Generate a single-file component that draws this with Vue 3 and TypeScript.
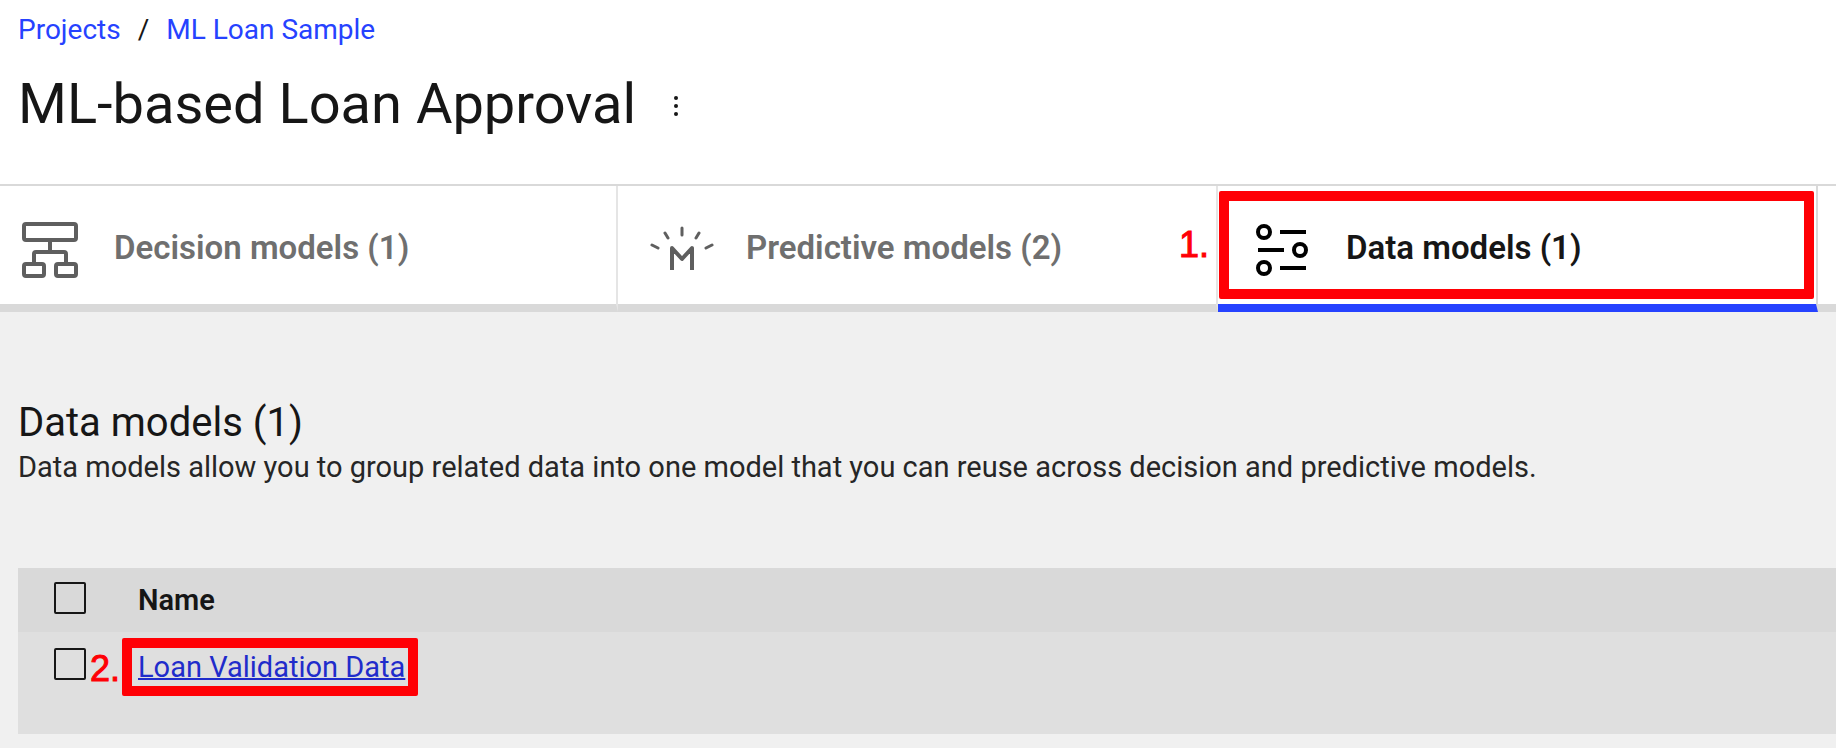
<script setup lang="ts">
import { ref } from 'vue'

type TabId = 'decision' | 'predictive' | 'data'

interface Tab {
  id: TabId
  label: string
  count: number
}

const tabs: Tab[] = [
  { id: 'decision', label: 'Decision models', count: 1 },
  { id: 'predictive', label: 'Predictive models', count: 2 },
  { id: 'data', label: 'Data models', count: 1 },
]

const activeTab = ref<TabId>('data')
const rows = ref([{ id: 1, name: 'Loan Validation Data', selected: false }])

function toggleAll(event: Event): void {
  const { checked } = event.target as HTMLInputElement
  rows.value.forEach((row) => (row.selected = checked))
}
</script>

<template>
  <div class="page">
    <header class="header">
      <nav class="breadcrumb" aria-label="Breadcrumb">
        <a href="#projects">Projects</a>
        <span class="slash">/</span>
        <a href="#sample">ML Loan Sample</a>
      </nav>
      <div class="title-row">
        <h1>ML-based Loan Approval</h1>
        <button class="menu" type="button" aria-label="More actions">
          <svg width="32" height="32" viewBox="0 0 32 32" fill="currentColor">
            <circle cx="16" cy="8" r="2" />
            <circle cx="16" cy="16" r="2" />
            <circle cx="16" cy="24" r="2" />
          </svg>
        </button>
      </div>
    </header>

    <div class="tabs" role="tablist">
      <button
        v-for="tab in tabs"
        :key="tab.id"
        class="tab"
        :class="{ active: tab.id === activeTab }"
        type="button"
        role="tab"
        :aria-selected="tab.id === activeTab"
        @click="activeTab = tab.id"
      >
        <svg class="icon" viewBox="0 0 64 64" fill="none" stroke="currentColor" stroke-width="4" aria-hidden="true">
          <template v-if="tab.id === 'decision'">
            <rect x="6" y="6" width="52" height="16" rx="2" />
            <rect x="6" y="46" width="20" height="12" rx="2" />
            <rect x="38" y="46" width="20" height="12" rx="2" />
            <path d="M32 22v12M16 46V36a2 2 0 0 1 2-2h28a2 2 0 0 1 2 2v10" />
          </template>
          <template v-else-if="tab.id === 'predictive'">
            <path d="M22 52V30l10 11 10-11v22" stroke-linejoin="round" />
            <path d="M32 10v7M15 15l3 5M49 15l-3 5M2 27l6 3M62 27l-6 3" stroke-width="3" stroke-linecap="round" />
          </template>
          <template v-else>
            <circle cx="14" cy="14" r="6" />
            <circle cx="50" cy="32" r="6" />
            <circle cx="14" cy="50" r="6" />
            <path d="M30 14h26M8 32h26M30 50h26" />
          </template>
        </svg>
        <span class="tab-label">{{ tab.label }} ({{ tab.count }})</span>
        <span v-if="tab.id === 'data'" class="mark tab-mark"><span class="step">1.</span></span>
      </button>
    </div>

    <main class="content">
      <h2>Data models (1)</h2>
      <p>Data models allow you to group related data into one model that you can reuse across decision and predictive models.</p>

      <table>
        <thead>
          <tr>
            <th class="select"><input type="checkbox" aria-label="Select all data models" @change="toggleAll" /></th>
            <th scope="col">Name</th>
          </tr>
        </thead>
        <tbody>
          <tr v-for="row in rows" :key="row.id">
            <td class="select"><input v-model="row.selected" type="checkbox" :aria-label="`Select ${row.name}`" /></td>
            <td>
              <a class="row-link" href="#data-model">{{ row.name }}<span class="mark row-mark"><span class="step">2.</span></span></a>
            </td>
          </tr>
        </tbody>
      </table>
    </main>
  </div>
</template>

<style>
body {
  background: #f0f0f0;
}
</style>

<style scoped>
.page {
  color: #161616;
  font-family: Roboto, "Liberation Sans", sans-serif;
  font-size: 28px;
  line-height: 36px;
  overflow-x: hidden;
}

.header {
  padding: 12px 18px 44px;
  background: #fff;
}

.breadcrumb {
  display: flex;
  gap: 17px;
}

.breadcrumb a {
  color: #2642ff;
  text-decoration: none;
}

.title-row {
  display: flex;
  align-items: center;
  gap: 24px;
  margin-top: 20px;
}

h1 {
  margin: 0;
  font-size: 56px;
  font-weight: 400;
  line-height: 72px;
}

.menu {
  display: flex;
  padding: 4px 0 0;
  border: 0;
  background: none;
  color: #161616;
}

.tabs {
  display: flex;
  border-top: 2px solid #d9d9d9;
  background: linear-gradient(#d9d9d9, #d9d9d9) bottom / 100% 8px no-repeat #fff;
}

.tab {
  position: relative;
  box-sizing: content-box;
  display: flex;
  flex: 0 1 566px;
  align-items: center;
  gap: 32px;
  height: 108px;
  padding: 10px 0 0 32px;
  border: 0;
  border-right: 2px solid #e5e5e5;
  border-bottom: 8px solid #d9d9d9;
  background: none;
  color: #6f6f6f;
  font: 600 33px/40px Roboto, "Liberation Sans", sans-serif;
  white-space: nowrap;
}

.tab:first-child {
  flex-basis: 598px;
  padding-left: 18px;
}

.tab.active {
  border-right-color: #d9d9d9;
  border-bottom-color: #2642ff;
  color: #161616;
}

.icon {
  flex: none;
  width: 64px;
  height: 64px;
  color: #5f5f5f;
}

.tab-label {
  padding-bottom: 4px;
}

.active .icon {
  color: #000;
}

.mark {
  position: absolute;
  border: 10px solid #ff0005;
  border-radius: 2px;
  pointer-events: none;
}

.tab-mark {
  inset: 5px 2px 5px 1px;
}

.row-mark {
  inset: -11px -13px -11px -16px;
}

.step {
  position: absolute;
  top: 50%;
  right: 100%;
  margin-right: 20px;
  color: #ff0005;
  font: 400 36px/40px "Liberation Sans", Arial, sans-serif;
  transform: translateY(-50%);
  -webkit-text-stroke: 1px #ff0005;
}

.row-mark .step {
  margin: 2px 12px 0 0;
}

.content {
  padding: 85px 0 14px 18px;
}

h2 {
  margin: 0;
  font-size: 40px;
  font-weight: 400;
  line-height: 52px;
}

p {
  margin: 0;
  color: #262626;
  font-size: 29px;
}

table {
  width: 100%;
  margin-top: 83px;
  border-collapse: collapse;
  font-size: 29px;
}

th,
td {
  padding: 0;
  text-align: left;
  vertical-align: top;
}

th {
  height: 50px;
  padding-top: 14px;
  background: #d9d9d9;
  font-weight: 600;
}

td {
  height: 85px;
  padding-top: 17px;
  background: #dfdfdf;
}

.select {
  width: 84px;
  padding-left: 36px;
}

td.select {
  padding-top: 16px;
}

input {
  display: block;
  box-sizing: border-box;
  width: 32px;
  height: 32px;
  margin: 0;
  border: 2px solid #161616;
  border-radius: 2px;
  appearance: none;
}

input:checked {
  background: #161616;
}

.row-link {
  position: relative;
  display: inline-block;
  color: #1f2ccb;
  text-decoration: underline;
  text-decoration-thickness: 2px;
}
</style>
